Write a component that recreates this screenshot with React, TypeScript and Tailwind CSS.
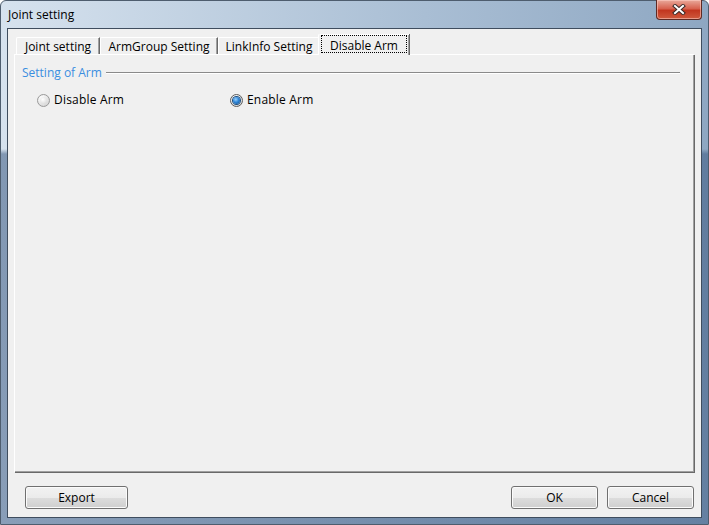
import React from "react";

function Tab({ label, width, selected }: { label: string; width: string; selected?: boolean }) {
  if (selected) {
    return (
      <div
        className={`relative z-10 -ml-[2px] -mr-[2px] -mb-[1px] flex h-[21px] flex-col items-center rounded-tl-[2px] border-l border-t border-white bg-[#f0f0f0] pt-[3px] shadow-[inset_-1px_0_0_#a0a0a0,1px_0_0_#696969] ${width}`}
      >
        <div className="pointer-events-none absolute left-[2px] right-[2px] top-[0px] h-[18px] border border-dotted border-black" />
        <span className="leading-[16px]">{label}</span>
      </div>
    );
  }
  return (
    <div
      className={`flex h-[17px] flex-col items-center rounded-tl-[2px] border-l border-t border-r border-white border-r-[#696969] pt-[1px] shadow-[inset_-1px_0_0_#a0a0a0] ${width}`}
    >
      <span className="leading-[16px]">{label}</span>
    </div>
  );
}

function Radio({ checked, label }: { checked?: boolean; label: string }) {
  return (
    <div className="flex items-center">
      <div
        className={`flex h-[13px] w-[13px] items-center justify-center rounded-full border ${
          checked ? "border-[#5c5c5c]" : "border-[#9a9a9a]"
        } bg-[radial-gradient(circle_at_35%_30%,#ffffff_0%,#f0f0f0_35%,#c9c9c9_100%)]`}
      >
        {checked ? (
          <div className="h-[7px] w-[7px] rounded-full bg-[radial-gradient(circle_at_40%_35%,#9ad3ff_0%,#2f86d8_45%,#0d4d8f_100%)] shadow-[0_0_0_1px_#1d4f80]" />
        ) : (
          <div className="h-[7px] w-[7px] rounded-full bg-[radial-gradient(circle_at_40%_35%,#ffffff_0%,#e4e4e4_60%,#cfcfcf_100%)]" />
        )}
      </div>
      <span className="ml-[4px] leading-[16px] tracking-[0.2px]">{label}</span>
    </div>
  );
}

function Button({ label, width }: { label: string; width: string }) {
  return (
    <div
      className={`flex h-[23px] items-center justify-center rounded-[3px] border border-[#707070] bg-[linear-gradient(to_bottom,#f2f2f2_0%,#ebebeb_50%,#dddddd_50%,#cfcfcf_100%)] pt-[1px] shadow-[inset_0_0_0_1px_#fbfbfb] ${width}`}
    >
      <span className="leading-[16px]">{label}</span>
    </div>
  );
}

export default function App() {
  return (
    <div
      className="h-[525px] w-[709px] overflow-hidden bg-white text-[12px] text-black"
      style={{ fontFamily: '"Segoe UI", "Open Sans", "Noto Sans", sans-serif' }}
    >
      <div className="flex h-full w-full flex-col rounded-t-[6px] border border-[#4e5d6e] bg-[linear-gradient(to_bottom,transparent_0px,transparent_148px,rgba(60,90,130,0.55)_153px,rgba(60,90,130,0.5)_100%),linear-gradient(to_right,#d6e2ee,#a9bed4_60%,#8ea7c2)]">
        {/* Title bar */}
        <div className="flex h-[27px] shrink-0 items-start justify-between">
          <span className="pl-[7px] pt-[6px] leading-[16px] text-black">Joint setting</span>
          <div className="-mt-[1px] mr-[6px] flex h-[20px] w-[46px] items-center justify-center rounded-b-[4px] border border-t-0 border-[#5e2a24] bg-[linear-gradient(to_bottom,#e9a99b_0%,#d7624f_45%,#c2361f_55%,#cf5a3d_100%)] shadow-[inset_0_0_0_1px_rgba(255,210,200,0.55)]">
            <svg width="14" height="11" viewBox="0 0 14 11">
              <path d="M3 2 L11 9 M11 2 L3 9" stroke="#3b2a28" strokeWidth="4" strokeLinecap="square" />
              <path d="M3 2 L11 9 M11 2 L3 9" stroke="#ffffff" strokeWidth="2" strokeLinecap="square" />
            </svg>
          </div>
        </div>

        {/* Client area */}
        <div className="mx-[6px] flex h-[490px] shrink-0 flex-col border border-[#3f4d5e] bg-[#f0f0f0]">
          <div className="flex flex-col px-[6px] pt-[5px]">
            {/* Tabs */}
            <div className="relative z-10 flex h-[20px] items-end pl-[2px]">
              <Tab label="Joint setting" width="w-[84px]" />
              <Tab label="ArmGroup Setting" width="w-[118px]" />
              <Tab label="LinkInfo Setting" width="w-[102px]" />
              <Tab label="Disable Arm" width="w-[91px]" selected />
            </div>
            {/* Panel */}
            <div className="mr-[1px] flex h-[418px] flex-col border-l border-t border-white shadow-[inset_-1px_-1px_0_#a0a0a0,1px_1px_0_#696969]">
              <div className="mr-[14px] mt-[10px] flex items-center pl-[7px]">
                <span className="leading-[16px] text-[#3b8ee0]">Setting of Arm</span>
                <div className="ml-[4px] flex-1 border-t border-b border-t-[#8a8a8a] border-b-white" />
              </div>
              <div className="mt-[11px] flex items-center pl-[22px]">
                <div className="w-[193px]">
                  <Radio label="Disable Arm" />
                </div>
                <Radio label="Enable Arm" checked />
              </div>
            </div>
          </div>
          {/* Buttons */}
          <div className="mt-[14px] flex items-center pl-[17px] pr-[7px]">
            <Button label="Export" width="w-[103px]" />
            <div className="flex-1" />
            <Button label="OK" width="w-[87px]" />
            <div className="w-[9px]" />
            <Button label="Cancel" width="w-[87px]" />
          </div>
        </div>
      </div>
    </div>
  );
}
